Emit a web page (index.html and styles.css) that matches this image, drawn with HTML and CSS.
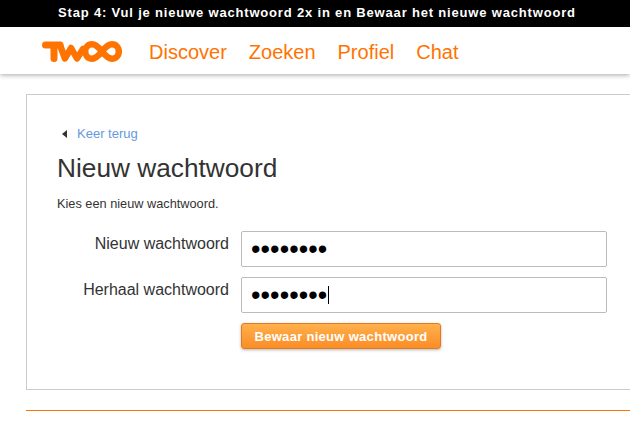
FILE: index.html
```html
<!DOCTYPE html>
<html lang="nl">
<head>
<meta charset="utf-8">
<title>Nieuw wachtwoord</title>
<link rel="stylesheet" href="styles.css">
</head>
<body>
<div class="step">Stap 4: Vul je nieuwe wachtwoord 2x in en Bewaar het nieuwe wachtwoord</div>
<header class="nav">
  <svg class="logo" width="80" height="21" viewBox="0 0 80 21" aria-label="Twoo">
    <g fill="none" stroke="#ff7300" stroke-linecap="round" stroke-linejoin="round">
      <path stroke-width="7" d="M3.500 4H18M12 4V17.500"/>
      <path stroke-width="6.500" d="M18 4L23 17.500L29 7L35 17.500L41 8"/>
      <path stroke-width="6.500" d="M60 10.500C64 5.500 66.500 3.300 70 3.300C74 3.300 76.800 6.500 76.800 10.500C76.800 14.500 74 17.700 70 17.700C66.500 17.700 64 15.500 60 10.500C56 5.500 53.500 3.300 50 3.300C46 3.300 43.200 6.500 43.200 10.500C43.200 14.500 46 17.700 50 17.700C53.500 17.700 56 15.500 60 10.500Z"/>
    </g>
  </svg>
  <a class="nav-link" href="#">Discover</a>
  <a class="nav-link" href="#">Zoeken</a>
  <a class="nav-link" href="#">Profiel</a>
  <a class="nav-link" href="#">Chat</a>
</header>
<main class="card">
  <a class="back" href="#"><span class="arrow"></span>Keer terug</a>
  <h1 class="title">Nieuw wachtwoord</h1>
  <p class="intro">Kies een nieuw wachtwoord.</p>
  <form class="form">
    <label class="label" for="p1">Nieuw wachtwoord</label>
    <input class="field" id="p1" type="password" value="abcdefgh">
    <label class="label" for="p2">Herhaal wachtwoord</label>
    <div class="field-wrap">
      <input class="field" id="p2" type="password" value="abcdefgh">
      <span class="caret"></span>
    </div>
    <button class="save" type="button">Bewaar nieuw wachtwoord</button>
  </form>
</main>
<div class="rule"></div>
</body>
</html>
```
FILE: styles.css
```css
* { box-sizing: border-box; }
html, body { margin: 0; padding: 0; }
body {
  width: 630px;
  height: 423px;
  overflow: hidden;
  background: #fff;
  font-family: "Liberation Sans", Arial, sans-serif;
  color: #333;
}
.step {
  height: 27px;
  background: #000;
  color: #fff;
  font-weight: bold;
  font-size: 13px;
  line-height: 25px;
  letter-spacing: 0.82px;
  padding-left: 58px;
  white-space: nowrap;
}
.nav {
  height: 47px;
  display: flex;
  align-items: center;
  padding-left: 42px;
  background: #fff;
  box-shadow: 0 1px 5px rgba(0,0,0,.35);
  position: relative;
}
.logo { margin-right: 27px; flex: none; margin-top: 1px; }
.nav-link {
  color: #ff7300;
  font-size: 20px;
  line-height: 24px;
  padding-top: 3px;
  text-decoration: none;
  margin-right: 22px;
}
.card {
  margin: 20px 0 0 26px;
  width: 620px;
  height: 296px;
  border: 1px solid #ccc;
  padding: 31px 0 0 30px;
}
.back {
  display: flex;
  align-items: center;
  color: #6699dd;
  font-size: 13px;
  line-height: 16px;
  text-decoration: none;
  padding-left: 5px;
}
.arrow {
  width: 0;
  height: 0;
  border: 4px solid transparent;
  border-left: 0;
  border-right: 5px solid #333;
  margin-right: 10px;
}
.title {
  margin: 10px 0 0;
  font-size: 26.250px;
  font-weight: normal;
  line-height: 32px;
}
.intro {
  margin: 12px 0 0;
  font-size: 12.750px;
  line-height: 16px;
}
.form {
  margin-top: 19px;
  display: grid;
  grid-template-columns: 202px 366px;
  column-gap: 12px;
  row-gap: 10px;
  margin-left: -30px;
  width: 580px;
}
.label {
  font-size: 16px;
  line-height: 20px;
  text-align: right;
  padding-top: 3px;
  white-space: nowrap;
}
.field-wrap { position: relative; }
.field {
  display: block;
  width: 366px;
  height: 36px;
  border: 1px solid #bbb;
  border-radius: 2px;
  padding: 0 9px;
  font-family: "Liberation Sans", Arial, sans-serif;
  font-size: 27px;
  letter-spacing: 0.100px;
  color: #000;
  background: #fff;
  outline: none;
}
.caret {
  position: absolute;
  left: 87px;
  top: 9px;
  width: 1px;
  height: 18px;
  background: #000;
}
.save {
  grid-column: 2;
  width: 200px;
  height: 26px;
  border: 1px solid #e07b20;
  border-radius: 3px;
  background: linear-gradient(#ffb04c, #fb8c26);
  color: #fff;
  font-family: "Liberation Sans", Arial, sans-serif;
  font-size: 13px;
  font-weight: bold;
  letter-spacing: 0.300px;
  padding: 0;
  box-shadow: 0 1px 3px rgba(0,0,0,.3);
}
.rule {
  margin: 20px 0 0 26px;
  height: 1px;
  background: #ff7300;
}
```
